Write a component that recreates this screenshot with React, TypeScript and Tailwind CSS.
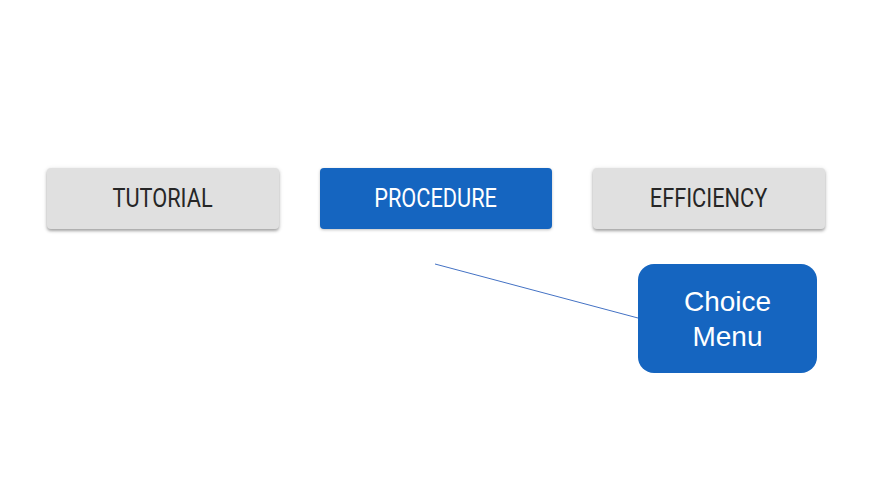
import type { FC } from 'react';

type Choice = {
  label: string;
  active?: boolean;
};

const choices: Choice[] = [
  { label: 'TUTORIAL' },
  { label: 'PROCEDURE', active: true },
  { label: 'EFFICIENCY' },
];

const ChoiceButton: FC<Choice> = ({ label, active }) => (
  <button
    className={
      active
        ? 'w-[232px] h-[61px] rounded-[4px] bg-[#1565c0] text-white text-[25px] font-normal flex items-center justify-center shadow-[0_1px_3px_rgba(0,0,0,0.25)]'
        : 'w-[232px] h-[61px] rounded-[4px] bg-[#e0e0e0] text-[#262626] text-[25px] font-normal flex items-center justify-center shadow-[0_2px_3px_rgba(0,0,0,0.3),0_1px_5px_rgba(0,0,0,0.12)]'
    }
    style={{ fontFamily: 'Roboto, sans-serif' }}
  >
    <span className="inline-block scale-x-[0.87] leading-none">{label}</span>
  </button>
);

export default function App() {
  return (
    <div className="relative w-[871px] h-[486px] bg-white overflow-hidden">
      <div className="flex gap-[41px] pl-[47px] pt-[168px]">
        {choices.map((c) => (
          <ChoiceButton key={c.label} {...c} />
        ))}
      </div>
      <div className="flex justify-end pr-[54px] mt-[35px]">
        <div
          className="w-[179px] h-[109px] rounded-[16px] bg-[#1565c0] text-white text-[28px] leading-[35px] flex items-center justify-center text-center"
          style={{ fontFamily: '"Liberation Sans", Arial, sans-serif' }}
        >
          Choice
          <br />
          Menu
        </div>
      </div>
      <svg
        className="absolute left-0 top-0 pointer-events-none"
        width="871"
        height="486"
      >
        <line x1="435" y1="264" x2="638" y2="318" stroke="#4472c4" strokeWidth="1" />
      </svg>
    </div>
  );
}
